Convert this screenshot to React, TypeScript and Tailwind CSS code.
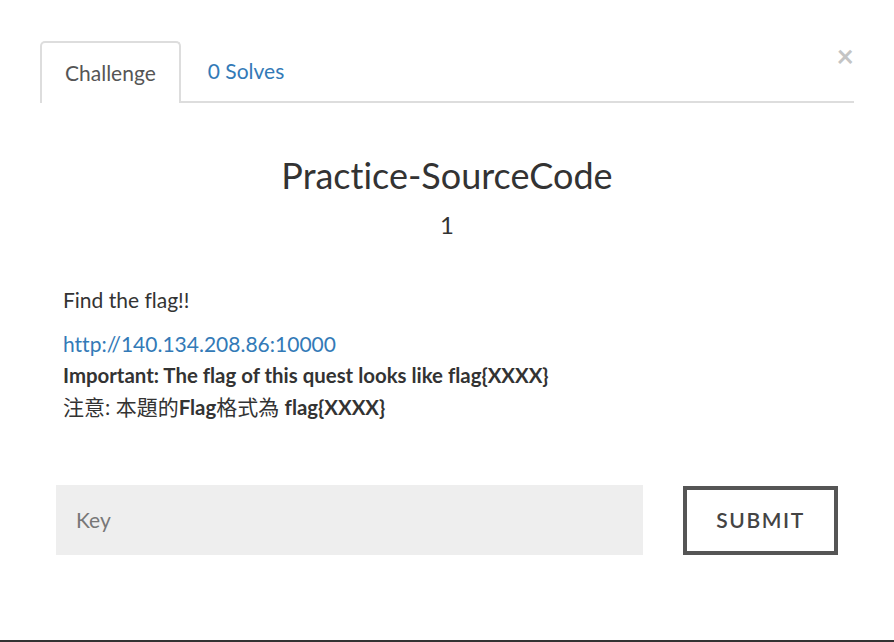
import React from "react";

export default function App() {
  return (
    <div
      className="w-[894px] h-[642px] bg-white relative overflow-hidden text-[#333] [font-variant-ligatures:none]"
      style={{ fontFamily: "Lato, 'Noto Sans CJK TC', sans-serif" }}
    >
      <div className="pt-[41px] px-[40px] relative">
        <div className="flex border-b-2 border-[#ddd] w-[814px]">
          <div className="h-[62px] -mb-[2px] px-[23px] flex items-center border-2 border-b-0 border-[#ddd] rounded-t-[5px] bg-white text-[21px] text-[#555]">
            Challenge
          </div>
          <div className="h-[60px] px-[27px] flex items-center text-[21px] text-[#337ab7]">
            0 Solves
          </div>
        </div>
        <button className="absolute right-[40px] top-[40px] text-[30px] leading-none text-[#c4c4c4] font-bold">
          ×
        </button>
      </div>

      <div className="flex flex-col items-center mt-[50px]">
        <div className="text-[36px] leading-[44px] text-[#333]">Practice-SourceCode</div>
        <div className="text-[24px] leading-[30px] mt-[13px] text-[#333]">1</div>
      </div>

      <div className="px-[63px] mt-[45px] text-[21px] text-[#333]">
        <p className="leading-[30px]">Find the flag!!</p>
        <p className="leading-[31px] mt-[13px]">
          <span className="text-[#337ab7] font-normal">http://140.134.208.86:10000</span>
          <br />
          <b className="font-bold text-[20.4px]">Important: The flag of this quest looks like flag{"{"}XXXX{"}"}</b>
          <br />
          <span>
            注意: 本題的<b className="font-bold text-[20.4px]">Flag</b>格式為 <b className="font-bold text-[20.4px]">flag{"{"}XXXX{"}"}</b>
          </span>
        </p>
      </div>

      <div className="flex items-center pl-[56px] mt-[62px]">
        <div className="w-[587px] h-[70px] bg-[#eeeeee] flex items-center pl-[20px] text-[21px] text-[#777]">
          Key
        </div>
        <button className="ml-[40px] w-[155px] h-[69px] border-[4px] border-[#555] bg-white text-[21px] font-semibold tracking-[1.6px] text-[#444]">
          SUBMIT
        </button>
      </div>

      <div className="absolute left-0 right-0 bottom-0 h-[2px] bg-[#333]" />
    </div>
  );
}
